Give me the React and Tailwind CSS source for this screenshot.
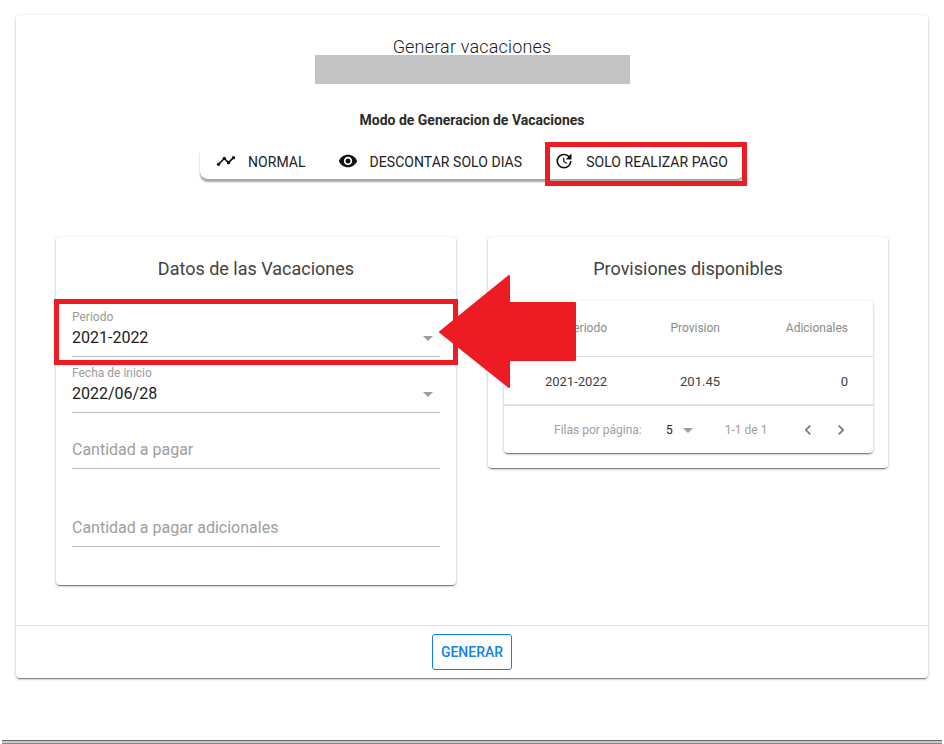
import { MdTimeline, MdVisibility, MdUpdate, MdArrowDropDown, MdChevronLeft, MdChevronRight } from "react-icons/md";

const modes = [
  { label: "NORMAL", Icon: MdTimeline },
  { label: "DESCONTAR SOLO DIAS", Icon: MdVisibility },
  { label: "SOLO REALIZAR PAGO", Icon: MdUpdate },
];

const cardShadow = "shadow-[0_1px_3px_rgba(0,0,0,0.3),0_2px_1px_-1px_rgba(0,0,0,0.4)]";

const Field = ({ label, value, placeholder, className = "" }) => (
  <div className={`relative h-12 border-b border-[#bdbdbd] ${className}`}>
    {label && <div className="pt-px text-xs leading-[14px] text-[#9b9b9b]">{label}</div>}
    {value && <div className="mt-[3px] text-base leading-[22px] text-[#212121]">{value}</div>}
    {placeholder && <div className="pt-[18px] text-base leading-[22px] text-[#9e9e9e]">{placeholder}</div>}
    {value && <MdArrowDropDown size={24} className="absolute right-0 top-[17px] text-[#9e9e9e]" />}
  </div>
);

export default function App() {
  return (
    <div className="relative flex h-[744px] flex-col overflow-hidden bg-white font-['Roboto',sans-serif]">
      <div className="px-4 pt-[15px]">
        <div className={`h-[663px] rounded bg-white ${cardShadow}`}>
          {/* Header */}
          <div className="h-[610px]">
            <div className="flex flex-col items-center">
              <h1 className="pt-[21px] text-[18px] font-light leading-[21px] tracking-[0.01em] text-[#212121]">Generar vacaciones</h1>
              <div className="-mt-0.5 h-[29px] w-[315px] bg-[#c3c3c3]" />
              <p className="mt-[27px] text-sm font-bold leading-[18px] text-[#2b2b2b]">Modo de Generacion de Vacaciones</p>
              <div className="mt-[16px] flex h-[34px] rounded-lg bg-white shadow-[0_3px_2px_rgba(0,0,0,0.35)]">
                {modes.map(({ label, Icon }) => (
                  <div key={label} className="flex items-center px-4 text-sm tracking-[0.003em] text-[#212121]">
                    <Icon size={20} className="mr-3 -mt-0.5 text-[#111]" />
                    {label}
                  </div>
                ))}
              </div>
            </div>

            {/* Cards */}
            <div className="mt-[58px] flex gap-8 px-10">
              <div className={`h-[348px] w-[400px] rounded-sm bg-white px-4 ${cardShadow}`}>
                <h2 className="pt-[21px] text-center text-[18px] leading-[21px] text-[#424242]">Datos de las Vacaciones</h2>
                <Field label="Periodo" value="2021-2022" className="mt-[30px]" />
                <Field label="Fecha de inicio" value="2022/06/28" className="mt-2" />
                <Field placeholder="Cantidad a pagar" className="mt-2" />
                <Field placeholder="Cantidad a pagar adicionales" className="mt-[30px]" />
              </div>

              <div className={`h-[231px] w-[400px] rounded-sm bg-white px-4 ${cardShadow}`}>
                <h2 className="pt-[21px] text-center text-[18px] leading-[21px] text-[#424242]">Provisiones disponibles</h2>
                <div className={`mt-[22px] h-[152px] w-[369px] rounded bg-white ${cardShadow}`}>
                  <div className="grid h-14 grid-cols-[103px_113px_128px] items-center border-b border-[#e0e0e0] pb-0.5 text-right text-xs text-[#8a8a8a]">
                    <span>Periodo</span>
                    <span>Provision</span>
                    <span>Adicionales</span>
                  </div>
                  <div className="grid h-[49px] grid-cols-[103px_113px_128px] items-center border-b-2 border-[#e0e0e0] pt-0.5 text-right text-[13px] text-[#424242]">
                    <span>2021-2022</span>
                    <span>201.45</span>
                    <span>0</span>
                  </div>
                  <div className="flex h-[47px] items-center text-xs text-[#9e9e9e]">
                    <span className="ml-[50px] w-[112px] whitespace-nowrap">Filas por página:</span>
                    <span className="text-[#212121]">5</span>
                    <MdArrowDropDown size={24} className="ml-[3px] text-[#9e9e9e]" />
                    <span className="ml-[25px] w-[41px] whitespace-nowrap">1-1 de 1</span>
                    <MdChevronLeft size={20} className="ml-[32px] text-[#757575]" />
                    <MdChevronRight size={20} className="ml-[13px] text-[#757575]" />
                  </div>
                </div>
              </div>
            </div>
          </div>

          {/* Footer */}
          <div className="flex h-[53px] items-center justify-center border-t border-[#e0e0e0]">
            <button className="h-9 w-20 rounded-[3px] border border-[#1181e8] text-sm font-medium text-[#1181e8]">GENERAR</button>
          </div>
        </div>
      </div>

      {/* Window edge */}
      <div className="mt-auto h-1 border-y border-t-[#666] border-b-[#888] bg-[#c8c8c8] mx-0.5" />

      {/* Red annotations */}
      <div className="absolute left-[545px] top-[142px] h-[44px] w-[202px] border-[5px] border-[#ed1c24]" />
      <div className="absolute left-[54px] top-[299px] h-[66px] w-[404px] border-[5px] border-[#ed1c24]" />
      <svg className="absolute left-[436px] top-[270px]" width="145" height="125" viewBox="0 0 145 125">
        <polygon points="4,62 73,6 73,33 139,33 139,90 73,90 73,117" fill="#ed1c24" stroke="#ed1c24" strokeWidth="2" strokeLinejoin="round" />
      </svg>
    </div>
  );
}
